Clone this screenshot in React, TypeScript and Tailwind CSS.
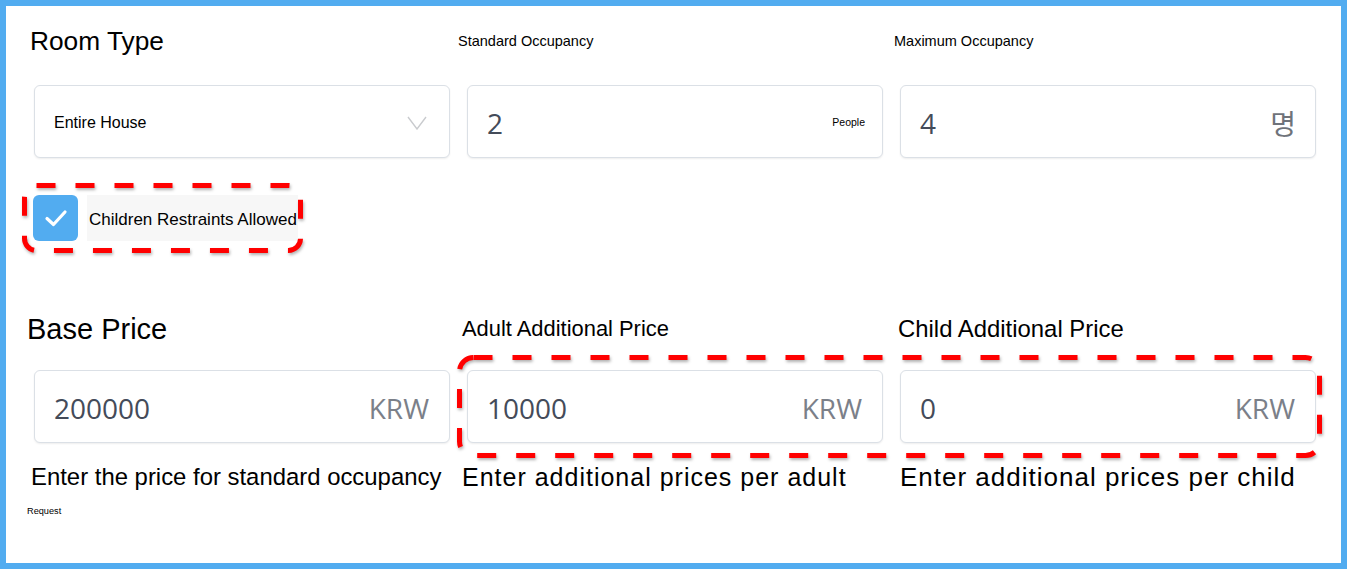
import type { ReactNode } from 'react';

const GRID = 'grid grid-cols-[416px_416px_416px] gap-x-[17px]';

// red dashed annotation drawn over a group of fields
function DashedMark({ className, w, h, rx }: { className: string; w: number; h: number; rx: number }) {
  return (
    <svg
      aria-hidden
      width={w + 5}
      height={h + 5}
      className={`pointer-events-none absolute drop-shadow-[1px_2px_1.5px_rgba(0,0,0,0.3)] ${className}`}
    >
      <rect
        x={2.5}
        y={2.5}
        width={w}
        height={h}
        rx={rx}
        fill="none"
        stroke="#ff0000"
        strokeWidth={5}
        strokeDasharray="19 20"
      />
    </svg>
  );
}

function Field({ children, unit, pr = 'pr-[20px]' }: { children: ReactNode; unit?: ReactNode; pr?: string }) {
  return (
    <div
      className={`flex h-[73px] items-center justify-between rounded-md border border-[#dbe0e6] bg-white pl-[19px] pt-[2px] shadow-[0_1px_2px_rgba(0,0,0,0.07)] ${pr}`}
    >
      <span className="font-['Open_Sans',sans-serif] text-[28px] leading-none text-[#444b59]">{children}</span>
      {unit}
    </div>
  );
}

const Krw = () => (
  <span className="font-['Open_Sans',sans-serif] text-[28px] leading-none text-[#7b8089]">KRW</span>
);

export default function App() {
  return (
    <div className="h-[569px] w-[1347px] border-[6px] border-[#52acf0] bg-white font-['Liberation_Sans',Arial,sans-serif] text-black">
      <div className="pl-[28px] pt-[20px]">
        {/* occupancy */}
        <div className={`${GRID} items-start leading-[30px]`}>
          <h2 className="ml-[-4px] text-[26.3px]">Room Type</h2>
          <div className="ml-[-9px] text-[14.5px]">Standard Occupancy</div>
          <div className="ml-[-6px] text-[14.5px]">Maximum Occupancy</div>
        </div>

        <div className={`${GRID} mt-[29px]`}>
          <div className="flex h-[73px] items-center justify-between rounded-md border border-[#dbe0e6] bg-white pl-[19px] pr-[22px] pt-[3px] shadow-[0_1px_2px_rgba(0,0,0,0.07)]">
            <span className="text-[16px]">Entire House</span>
            <svg width="20" height="14" viewBox="0 0 20 14" aria-hidden>
              <polyline points="1,1 10,13 19,1" fill="none" stroke="#c9cbce" strokeWidth="1.4" />
            </svg>
          </div>
          <Field pr="pr-[17px]" unit={<span className="text-[10.5px]">People</span>}>
            2
          </Field>
          <Field
            pr="pr-[19px]"
            unit={
              <span className="font-['Noto_Sans_CJK_KR',sans-serif] text-[28px] leading-none text-[#6f737a]">명</span>
            }
          >
            4
          </Field>
        </div>

        <div className="relative mt-[37px] ml-[-1px] inline-flex gap-[9px]">
          <span className="flex h-[46px] w-[45px] items-center justify-center rounded-md bg-[#52acf0]">
            <svg width="24" height="18" viewBox="0 0 24 18" aria-hidden>
              <path d="M3 9.5 L9.5 15.5 L21 3" fill="none" stroke="#fff" strokeWidth="3.2" strokeLinecap="round" strokeLinejoin="round" />
            </svg>
          </span>
          <label className="flex h-[46px] w-[211px] items-center bg-[#f7f7f7] pl-[2px] pt-[4px] text-[17px] whitespace-nowrap">
            Children Restraints Allowed
          </label>
          <DashedMark className="left-[-11px] top-[-12px]" w={276} h={65} rx={12} />
        </div>

        {/* prices */}
        <div className={`${GRID} mt-[71px] items-start leading-[34px]`}>
          <h2 className="ml-[-7px] text-[29px]">Base Price</h2>
          <div className="ml-[-5px] text-[21.9px]">Adult Additional Price</div>
          <div className="ml-[-2px] text-[23.9px]">Child Additional Price</div>
        </div>

        <div className={`${GRID} mt-[24px]`}>
          <Field unit={<Krw />}>200000</Field>
          <div className="relative col-span-2 grid grid-cols-2 gap-x-[17px]">
            <Field unit={<Krw />}>10000</Field>
            <Field unit={<Krw />}>0</Field>
            <DashedMark className="left-[-10px] top-[-15px]" w={860} h={98} rx={14} />
          </div>
        </div>

        <div className={`${GRID} mt-[18px] leading-[32px] whitespace-nowrap`}>
          <p className="ml-[-3px] text-[23.9px]">Enter the price for standard occupancy</p>
          <p className="ml-[-5px] text-[25px] tracking-[1px]">Enter additional prices per adult</p>
          <p className="ml-[0px] text-[26px] tracking-[1px]">Enter additional prices per child</p>
        </div>

        <div className="mt-[12px] ml-[-7px] text-[9.2px] leading-[12px]">Request</div>
      </div>
    </div>
  );
}
